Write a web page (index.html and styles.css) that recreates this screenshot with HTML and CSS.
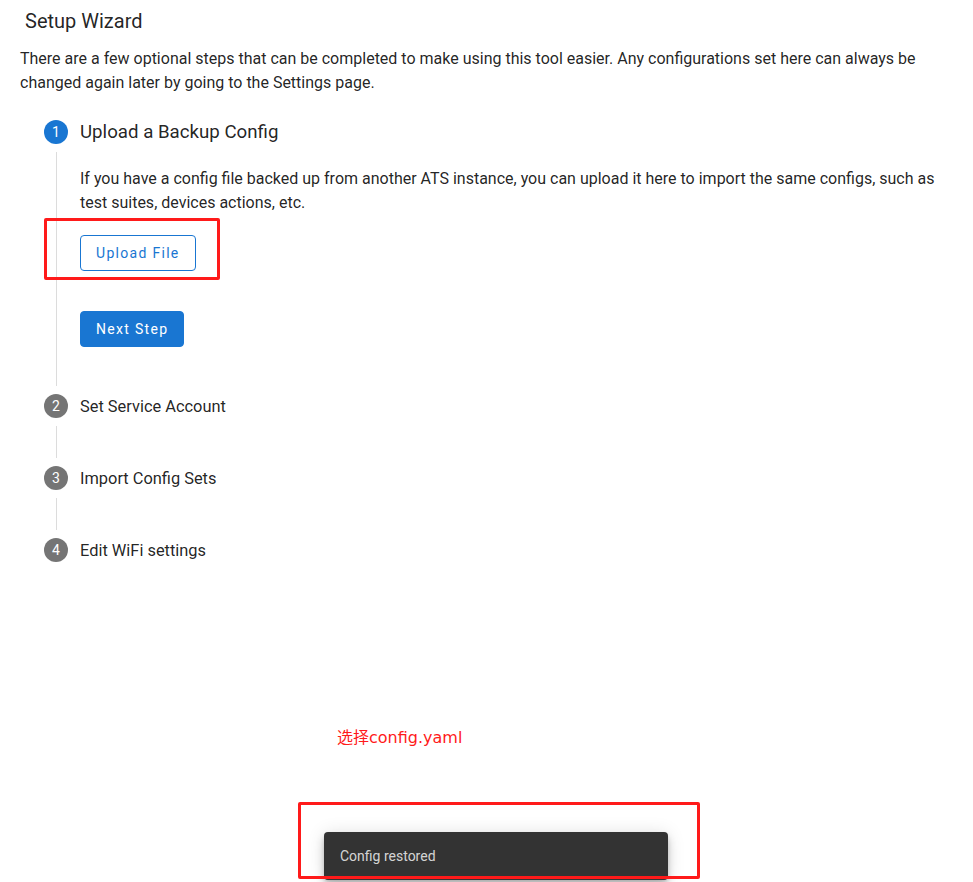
FILE: index.html
```html
<!DOCTYPE html>
<html lang="en">
<head>
<meta charset="utf-8">
<title>Setup Wizard</title>
<link rel="stylesheet" href="styles.css">
</head>
<body>
<main class="page">
  <h1 class="title">Setup Wizard</h1>
  <p class="intro">There are a few optional steps that can be completed to make using this tool easier. Any configurations set here can always be changed again later by going to the Settings page.</p>

  <div class="stepper">
    <div class="step step-first">
      <div class="rail">
        <span class="num num-active">1</span>
        <span class="line"></span>
      </div>
      <div class="body">
        <div class="label label-active">Upload a Backup Config</div>
        <p class="step-text">If you have a config file backed up from another ATS instance, you can upload it here to import the same configs, such as test suites, devices actions, etc.</p>
        <button class="btn btn-outline" type="button">Upload File</button>
        <button class="btn btn-filled" type="button">Next Step</button>
      </div>
    </div>
    <div class="step">
      <div class="rail">
        <span class="num">2</span>
        <span class="line"></span>
      </div>
      <div class="body">
        <div class="label">Set Service Account</div>
      </div>
    </div>
    <div class="step">
      <div class="rail">
        <span class="num">3</span>
        <span class="line"></span>
      </div>
      <div class="body">
        <div class="label">Import Config Sets</div>
      </div>
    </div>
    <div class="step step-last">
      <div class="rail">
        <span class="num">4</span>
      </div>
      <div class="body">
        <div class="label">Edit WiFi settings</div>
      </div>
    </div>
  </div>
</main>

<div class="snackbar">Config restored</div>

<div class="mark mark-upload"></div>
<div class="mark mark-snack"></div>
<div class="note">选择config.yaml</div>
</body>
</html>
```

FILE: styles.css
```css
html, body {
  margin: 0;
  padding: 0;
  background: #ffffff;
}

body {
  font-family: Roboto, "Noto Sans", "Liberation Sans", sans-serif;
  color: rgba(0, 0, 0, 0.87);
  width: 973px;
  height: 882px;
  overflow: hidden;
  position: relative;
}

.page {
  padding: 8px 20px 0 20px;
}

.title {
  margin: 0 0 0 5px;
  font-size: 20px;
  font-weight: 400;
  line-height: 26px;
}

.intro {
  margin: 13px 0 0 0;
  font-size: 16px;
  line-height: 24px;
}

.stepper {
  margin-top: 25px;
  padding-left: 24px;
  display: flex;
  flex-direction: column;
}

.step {
  display: flex;
  gap: 12px;
}

.rail {
  width: 24px;
  display: flex;
  flex-direction: column;
  align-items: center;
  flex: none;
}

.num {
  width: 24px;
  height: 24px;
  border-radius: 50%;
  background: #757575;
  color: #ffffff;
  font-size: 14px;
  line-height: 24px;
  text-align: center;
  flex: none;
}

.num-active {
  background: #1976d2;
}

.line {
  flex: 1;
  width: 1px;
  background: #dcdcdc;
  margin: 8px 0;
}

.body {
  flex: 1;
  padding-bottom: 48px;
}

.step-first .body {
  padding-bottom: 47px;
}

.step-last .body {
  padding-bottom: 0;
}

.label {
  font-size: 16.4px;
  line-height: 24px;
  padding-top: 1px;
  margin-bottom: -1px;
}

.label-active {
  font-size: 18.7px;
  padding-top: 0;
  margin-bottom: 0;
}

.step-text {
  margin: 23px 0 0 0;
  font-size: 16px;
  line-height: 24px;
}

.btn {
  display: block;
  height: 36px;
  padding: 0 15px;
  border-radius: 4px;
  font-family: Roboto, "Noto Sans", sans-serif;
  font-size: 14px;
  font-weight: 400;
  letter-spacing: 1.3px;
  cursor: pointer;
}

.btn-outline {
  margin-top: 20px;
  background: #ffffff;
  color: #1976d2;
  border: 1px solid #1976d2;
}

.btn-filled {
  margin-top: 40px;
  background: #1976d2;
  color: #ffffff;
  border: 1px solid #1976d2;
}

.snackbar {
  position: absolute;
  left: 324px;
  top: 832px;
  width: 344px;
  height: 48px;
  box-sizing: border-box;
  padding: 0 16px;
  background: #333333;
  color: rgba(255, 255, 255, 0.8);
  border-radius: 4px;
  font-size: 14px;
  line-height: 48px;
  box-shadow: 0 3px 5px -1px rgba(0, 0, 0, 0.2), 0 6px 10px 0 rgba(0, 0, 0, 0.14), 0 1px 18px 0 rgba(0, 0, 0, 0.12);
}

.mark {
  position: absolute;
  border: 3px solid #ff1a1a;
  border-radius: 2px;
  box-sizing: border-box;
}

.mark-upload {
  left: 44px;
  top: 218px;
  width: 176px;
  height: 62px;
}

.mark-snack {
  left: 298px;
  top: 802px;
  width: 402px;
  height: 77px;
}

.note {
  position: absolute;
  left: 337px;
  top: 727px;
  font-family: "DejaVu Sans", "Noto Sans CJK SC", sans-serif;
  font-size: 16px;
  line-height: 22px;
  color: #ff1a1a;
}
```
